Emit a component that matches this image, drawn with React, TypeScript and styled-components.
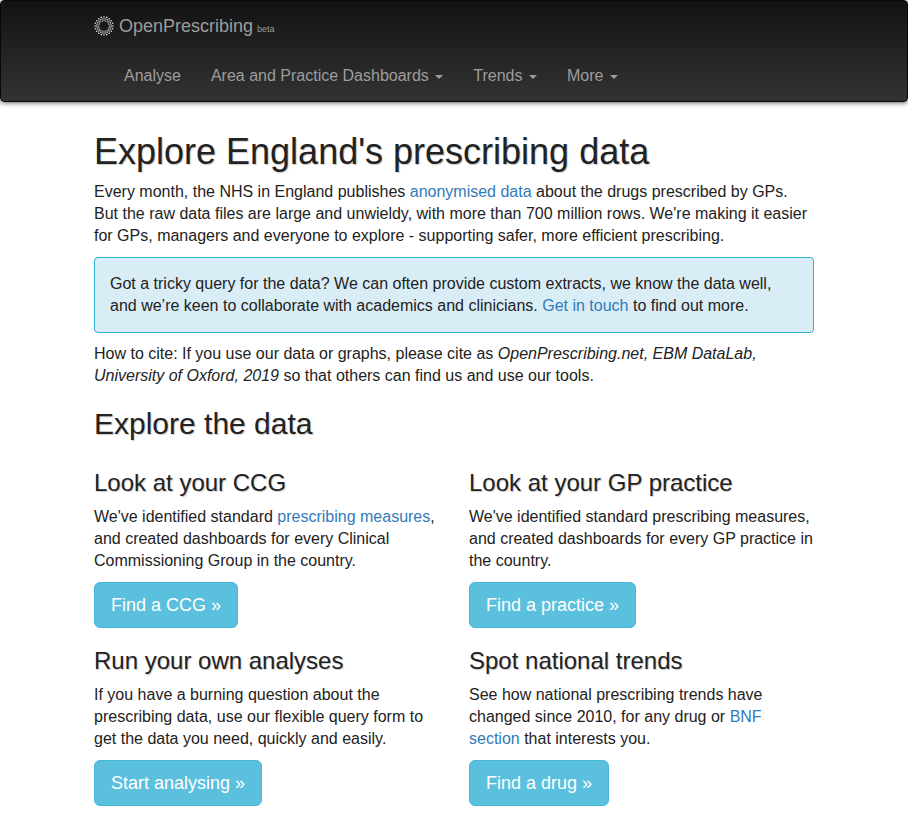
import React from "react";
import styled, { createGlobalStyle } from "styled-components";

const Global = createGlobalStyle`
  * { box-sizing: border-box; }
  body {
    margin: 0;
    background: #fff;
    color: #222;
    font: 16px/22px "Liberation Sans", Arial, sans-serif;
  }
`;

const Navbar = styled.nav`
  height: 102px;
  border: 1px solid #080808;
  border-radius: 4px;
  background: linear-gradient(to bottom, #121212 0, #333 100%);
  box-shadow: 0 1px 5px rgba(0, 0, 0, 0.6);
`;
const Container = styled.div`
  width: 720px;
  margin: 0 auto;
`;
const Brand = styled.a`
  display: flex;
  align-items: center;
  height: 50px;
  color: #9d9d9d;
  font-size: 18px;
  line-height: 20px;
`;
const Logo = styled.svg`
  width: 20px;
  height: 20px;
  margin-right: 5px;
`;
const Beta = styled.span`
  margin: 5px 0 0 4px;
  font-size: 9px;
`;
const Menu = styled.ul`
  display: flex;
  list-style: none;
  margin: 0;
  padding: 0 0 0 15px;
`;
const MenuItem = styled.li`
  display: flex;
  align-items: center;
  height: 50px;
  padding: 0 15px;
  color: #9d9d9d;
`;
const Caret = styled.span`
  margin: 2px 0 0 6.45px;
  border-top: 4px solid;
  border-left: 4px solid transparent;
  border-right: 4px solid transparent;
`;

const Title = styled.h1`
  margin: 30px 0 10px;
  font-size: 36px;
  font-weight: 500;
  line-height: 39px;
  text-shadow: 1px 1px 1px #ccc;
`;
const Subtitle = styled.h2`
  margin: 20px 0 10px;
  font-size: 30px;
  font-weight: 500;
  line-height: 33px;
  text-shadow: 1px 1px 1px #ccc;
`;
const Heading = styled.h3`
  margin: 0 0 10px;
  font-size: 24px;
  font-weight: 500;
  line-height: 26px;
  text-shadow: 1px 1px 1px #ccc;
`;
const Text = styled.p`
  margin: 0 0 10px;
`;
const Link = styled.a`
  color: #337ab7;
`;
const Notice = styled.div`
  margin-bottom: 10px;
  padding: 15px;
  border: 1px solid #31b0d5;
  border-radius: 4px;
  background: #d9edf7;
`;
const Grid = styled.div`
  display: grid;
  grid-template-columns: 345px 345px;
  gap: 20px 30px;
  margin-top: 30px;
`;
const Button = styled.a`
  display: inline-block;
  height: 46px;
  padding: 10px 16px;
  border: 1px solid #46b8da;
  border-radius: 6px;
  background: #5bc0de;
  color: #fff;
  font-size: 18px;
  line-height: 24px;
  vertical-align: top;
`;

const menu = [
  { label: "Analyse", dropdown: false },
  { label: "Area and Practice Dashboards", dropdown: true },
  { label: "Trends", dropdown: true },
  { label: "More", dropdown: true },
];

const cards = [
  {
    title: "Look at your CCG",
    body: <>We've identified standard <Link>prescribing measures</Link>, and created dashboards for every Clinical Commissioning Group in the country.</>,
    action: "Find a CCG »",
  },
  {
    title: "Look at your GP practice",
    body: <>We've identified standard prescribing measures, and created dashboards for every GP practice in the country.</>,
    action: "Find a practice »",
  },
  {
    title: "Run your own analyses",
    body: <>If you have a burning question about the prescribing data, use our flexible query form to get the data you need, quickly and easily.</>,
    action: "Start analysing »",
  },
  {
    title: "Spot national trends",
    body: <>See how national prescribing trends have changed since 2010, for any drug or <Link>BNF section</Link> that interests you.</>,
    action: "Find a drug »",
  },
];

const rings = [
  { radius: 9, dot: 0.82, offset: 0 },
  { radius: 7.1, dot: 0.76, offset: 0.5 },
  { radius: 5.3, dot: 0.58, offset: 0 },
];

function BrandLogo() {
  return (
    <Logo viewBox="-10 -10 20 20" fill="#e6e6e6">
      {rings.flatMap(({ radius, dot, offset }) =>
        Array.from({ length: 20 }, (_, i) => {
          const angle = ((i + offset) * Math.PI) / 10;
          return <circle key={`${radius}-${i}`} cx={radius * Math.cos(angle)} cy={radius * Math.sin(angle)} r={dot} />;
        })
      )}
    </Logo>
  );
}

export default function App() {
  return (
    <>
      <Global />
      <Navbar>
        <Container>
          <Brand><BrandLogo />OpenPrescribing<Beta>beta</Beta></Brand>
          <Menu>
            {menu.map((item) => (
              <MenuItem key={item.label}>{item.label}{item.dropdown && <Caret />}</MenuItem>
            ))}
          </Menu>
        </Container>
      </Navbar>
      <Container as="main">
        <Title>Explore England's prescribing data</Title>
        <Text>
          Every month, the NHS in England publishes <Link>anonymised data</Link> about the drugs prescribed by GPs.
          <br />
          But the raw data files are large and unwieldy, with more than 700 million rows. We're making it easier for GPs, managers and everyone to explore - supporting safer, more efficient prescribing.
        </Text>
        <Notice>
          Got a tricky query for the data? We can often provide custom extracts, we know the data well, and we’re keen to collaborate with academics and clinicians. <Link>Get in touch</Link> to find out more.
        </Notice>
        <Text>
          How to cite: If you use our data or graphs, please cite as <em>OpenPrescribing.net, EBM DataLab, University of Oxford, 2019</em> so that others can find us and use our tools.
        </Text>
        <Subtitle>Explore the data</Subtitle>
        <Grid>
          {cards.map((card) => (
            <section key={card.title}>
              <Heading>{card.title}</Heading>
              <Text>{card.body}</Text>
              <Button>{card.action}</Button>
            </section>
          ))}
        </Grid>
      </Container>
    </>
  );
}
